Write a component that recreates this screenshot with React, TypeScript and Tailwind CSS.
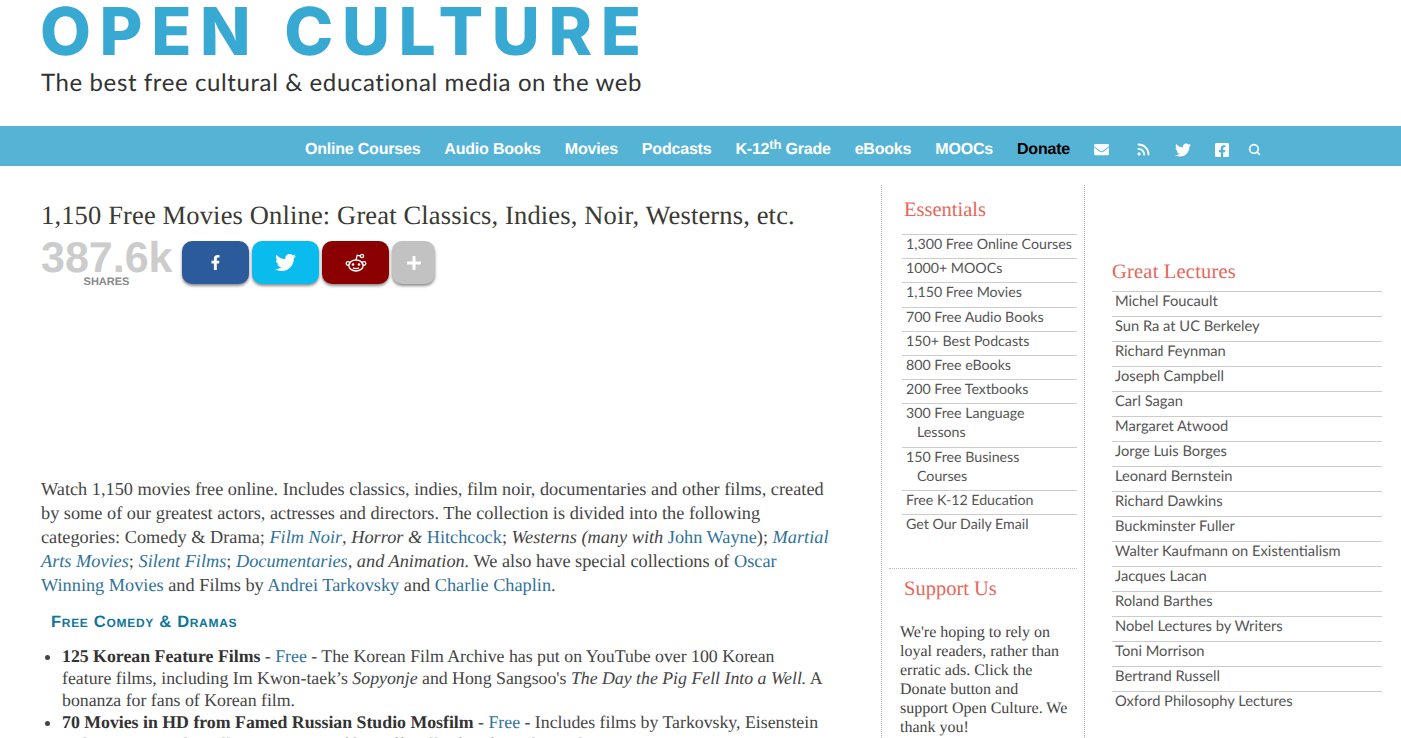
import React from "react"
import { FaFacebookF, FaTwitter, FaPlus, FaEnvelope, FaFacebookSquare } from "react-icons/fa"
import { Rss, Search } from "lucide-react"

const essentials = [
    "1,300 Free Online Courses",
    "1000+ MOOCs",
    "1,150 Free Movies",
    "700 Free Audio Books",
    "150+ Best Podcasts",
    "800 Free eBooks",
    "200 Free Textbooks",
    "300 Free Language\nLessons",
    "150 Free Business\nCourses",
    "Free K-12 Education",
    "Get Our Daily Email",
]

const lectures = [
    "Michel Foucault",
    "Sun Ra at UC Berkeley",
    "Richard Feynman",
    "Joseph Campbell",
    "Carl Sagan",
    "Margaret Atwood",
    "Jorge Luis Borges",
    "Leonard Bernstein",
    "Richard Dawkins",
    "Buckminster Fuller",
    "Walter Kaufmann on Existentialism",
    "Jacques Lacan",
    "Roland Barthes",
    "Nobel Lectures by Writers",
    "Toni Morrison",
    "Bertrand Russell",
    "Oxford Philosophy Lectures",
]

const serif = "font-['Liberation_Serif',serif]"

function A({ children }: { children: React.ReactNode }) {
    return <a className="text-[#2f7299]">{children}</a>
}

// outlined reddit alien, the icon packages only have the filled one
function RedditOutline() {
    return (
        <svg width="22" height="20" viewBox="0 0 22 20" fill="none" stroke="currentColor" strokeWidth="1.3">
            <ellipse cx="11" cy="12.5" rx="7.2" ry="5.5" />
            <circle cx="3" cy="10.5" r="1.8" />
            <circle cx="19" cy="10.5" r="1.8" />
            <path d="M11 7 L12.2 2.2 L15.5 3" />
            <circle cx="17" cy="3" r="1.6" />
            <circle cx="8" cy="11.5" r="1.3" fill="currentColor" stroke="none" />
            <circle cx="14" cy="11.5" r="1.3" fill="currentColor" stroke="none" />
            <path d="M8 14.8 C9.5 16 12.5 16 14 14.8" />
        </svg>
    )
}

export default function App() {
    return (
        <div className="h-[738px] overflow-hidden bg-white font-['Liberation_Sans',sans-serif] [text-rendering:geometricPrecision]">
            <header className="h-[126px] pl-[40px]">
                <div className="font-['Inter',sans-serif] text-[66px] font-extrabold leading-[62px] tracking-[8.6px] [word-spacing:2px] text-[#38a9d2]">OPEN CULTURE</div>
                <div className="mt-[6px] pl-[1px] font-['Lato',sans-serif] text-[24px] leading-[30px] tracking-[0.6px] text-[#333]">The best free cultural &amp; educational media on the web</div>
            </header>

            <nav className="flex h-[40px] items-center justify-end bg-[#55b4d6] pr-[140px] pt-[7px] text-[16px] font-bold tracking-[-0.2px] text-white">
                <span>Online Courses</span>
                <span className="ml-[24px]">Audio Books</span>
                <span className="ml-[24px]">Movies</span>
                <span className="ml-[24px]">Podcasts</span>
                <span className="ml-[24px]">K-12<sup className="-top-[5px] text-[13px]">th</sup> Grade</span>
                <span className="ml-[24px]">eBooks</span>
                <span className="ml-[24px]">MOOCs</span>
                <span className="ml-[24px] text-black">Donate</span>
                <FaEnvelope className="ml-[24px] text-[15px]" />
                <Rss size={15} strokeWidth={3} className="ml-[27px]" />
                <FaTwitter className="ml-[24px] text-[16px]" />
                <FaFacebookSquare className="ml-[23px] text-[16px]" />
                <Search size={13} strokeWidth={3} className="ml-[18px]" />
            </nav>

            <div className="flex">
                <main className="w-[881px] pl-[41px] pr-[40px] pt-[35px]">
                    <h1 className={`${serif} text-[26.5px] leading-[28px] tracking-[0.15px] text-[#3a3a32]`}>1,150 Free Movies Online: Great Classics, Indies, Noir, Westerns, etc.</h1>
                    <div className="mt-[12px] flex h-[48px] items-start">
                        <div className="w-[131px] text-center">
                            <div className="text-[43px] font-bold leading-[34px] text-[#cccccc]">387.6k</div>
                            <div className="mt-[1px] text-[11px] font-bold leading-[12px] text-[#888]">SHARES</div>
                        </div>
                        <div className="ml-[10px] flex gap-[3px] text-white">
                            <div className="flex h-[43px] w-[67px] items-center justify-center rounded-[10px] bg-[#2b5b9a] shadow-[0_2px_3px_rgba(0,0,0,0.45)]"><FaFacebookF className="text-[15px]" /></div>
                            <div className="flex h-[43px] w-[67px] items-center justify-center rounded-[10px] bg-[#0abcee] shadow-[0_2px_3px_rgba(0,0,0,0.45)]"><FaTwitter className="text-[21px]" /></div>
                            <div className="flex h-[43px] w-[67px] items-center justify-center rounded-[10px] bg-[#8b0000] shadow-[0_2px_3px_rgba(0,0,0,0.45)]"><RedditOutline /></div>
                            <div className="flex h-[43px] w-[43px] items-center justify-center rounded-[10px] bg-[#c2c2c2] shadow-[0_2px_3px_rgba(0,0,0,0.45)]"><FaPlus className="text-[16px]" /></div>
                        </div>
                    </div>

                    <p className={`${serif} mt-[188px] text-[18.3px] leading-[24px] text-[#444]`}>
                        Watch 1,150 movies free online. Includes classics, indies, film noir, documentaries and other films, created<br />
                        by some of our greatest actors, actresses and directors. The collection is divided into the following<br />
                        categories: Comedy &amp; Drama; <A><i>Film Noir</i></A>, <i>Horror &amp; </i><A>Hitchcock</A>; <i>Westerns (many with </i><A>John Wayne</A>); <A><i>Martial</i></A><br />
                        <A><i>Arts Movies</i></A>; <A><i>Silent Films</i></A>; <A><i>Documentaries</i></A><i>, and Animation.</i> We also have special collections of <A>Oscar</A><br />
                        <A>Winning Movies</A> and Films by <A>Andrei Tarkovsky</A> and <A>Charlie Chaplin</A>.
                    </p>
                    <h3 className="mt-[15px] pl-[10px] text-[16.5px] font-bold leading-[20px] tracking-[0.7px] text-[#0f769c] [font-variant:small-caps]">Free Comedy &amp; Dramas</h3>
                    <ul className={`${serif} mr-[17px] mt-[13px] list-disc pl-[21px] text-[17.8px] leading-[22px] text-[#444]`}>
                        <li><b className="text-[#333]">125 Korean Feature Films</b> - <A>Free</A> - The Korean Film Archive has put on YouTube over 100 Korean feature films, including Im Kwon-taek’s <i>Sopyonje</i> and Hong Sangsoo's <i>The Day the Pig Fell Into a Well.</i> A bonanza for fans of Korean film.</li>
                        <li><b className="text-[#333]">70 Movies in HD from Famed Russian Studio Mosfilm</b> - <A>Free</A> - Includes films by Tarkovsky, Eisenstein and Kurosawa. The collection presents films officially, free from the studio.</li>
                    </ul>
                </main>

                <aside className="mt-[19px] h-[553px] w-[204px] shrink-0 border-x border-dotted border-[#aaa]">
                    <h4 className={`${serif} pl-[22px] pt-[13px] text-[20.5px] leading-[24px] text-[#e5685a]`}>Essentials</h4>
                    <ul className="ml-[20px] mr-[7px] mt-[12px] font-['Lato',sans-serif] text-[14.2px] leading-[19px] text-[#555]">
                        {essentials.map((item) => (
                            <li key={item} className="whitespace-pre border-t border-[#ccc] pb-[4.2px] pl-[15px] -indent-[11px]">{item}</li>
                        ))}
                    </ul>
                    <div className="mx-[7px] mt-[30px] border-t border-dotted border-[#bbb]" />
                    <h4 className={`${serif} pl-[22px] pt-[8px] text-[20.5px] leading-[24px] text-[#e5685a]`}>Support Us</h4>
                    <p className={`${serif} mt-[22px] pl-[18px] pr-[9px] text-[16px] leading-[19px] text-[#444]`}>
                        We're hoping to rely on<br />
                        loyal readers, rather than<br />
                        erratic ads. Click the<br />
                        Donate button and<br />
                        support Open Culture. We<br />
                        thank you!
                    </p>
                </aside>

                <aside className="w-[316px] shrink-0 pl-[27px] pr-[19px] pt-[94px]">
                    <h4 className={`${serif} text-[20.5px] leading-[24px] tracking-[0.2px] text-[#e5685a]`}>Great Lectures</h4>
                    <ul className="mt-[7px] font-['Lato',sans-serif] text-[14.7px] leading-[19px] text-[#555]">
                        {lectures.map((item) => (
                            <li key={item} className="h-[25px] border-t border-[#ccc] pl-[3px]">{item}</li>
                        ))}
                    </ul>
                </aside>
            </div>
        </div>
    )
}
